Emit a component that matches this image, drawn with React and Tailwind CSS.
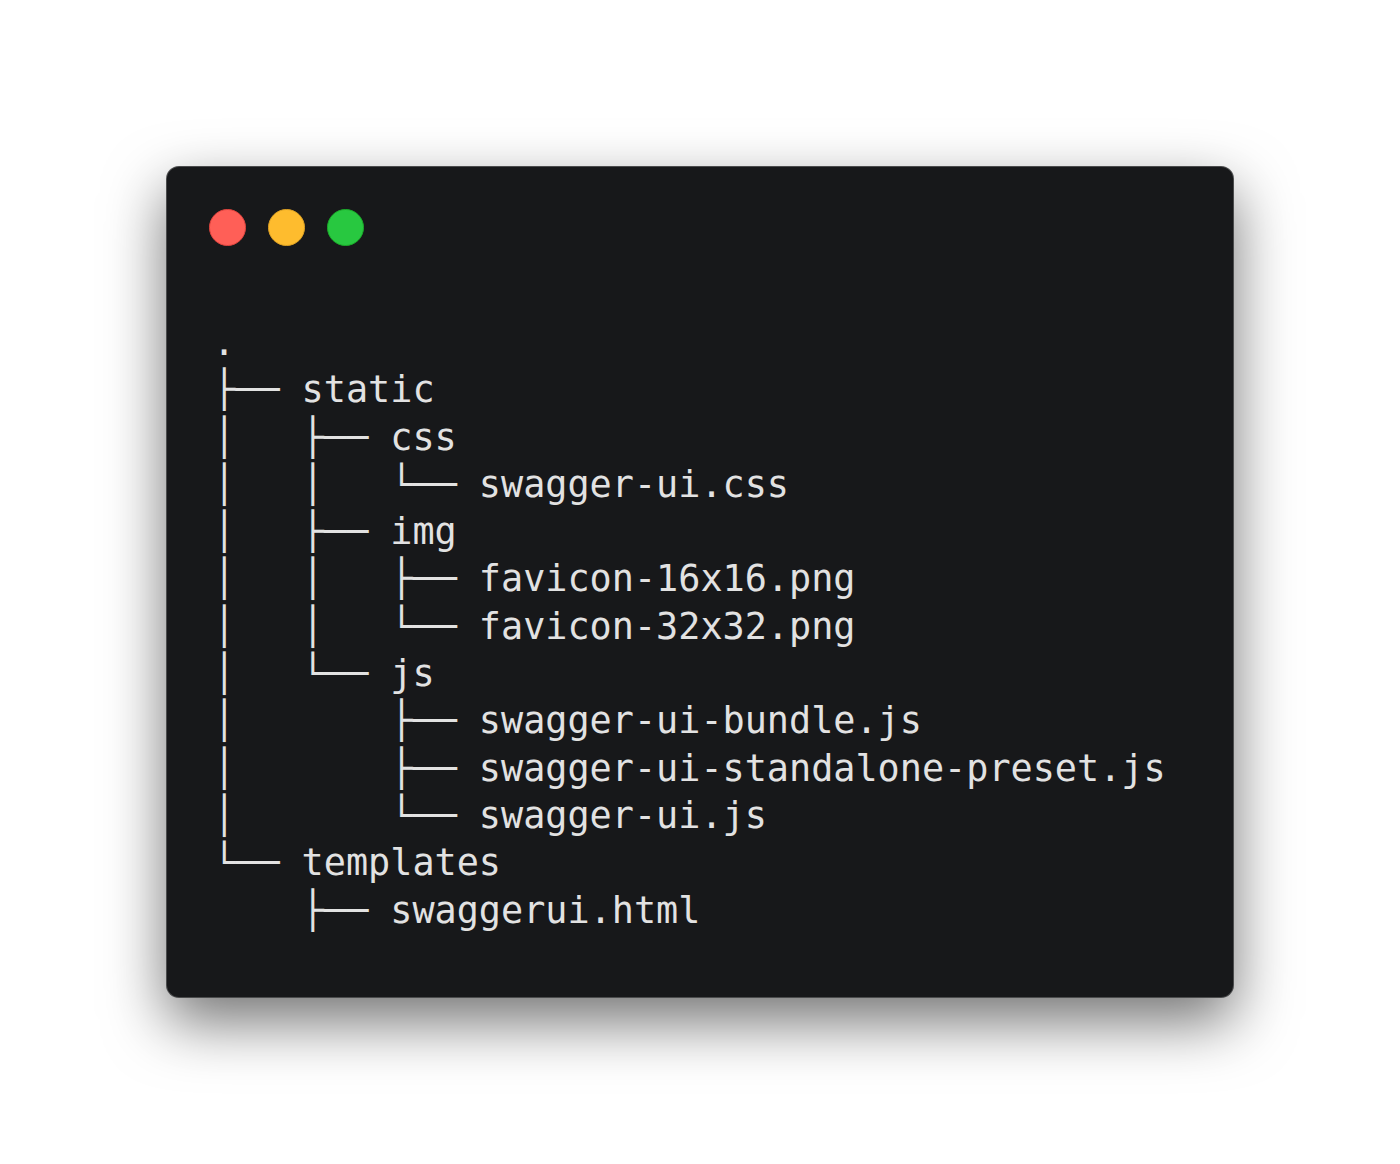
import React from 'react';

const tree = `.
├── static
│   ├── css
│   │   └── swagger-ui.css
│   ├── img
│   │   ├── favicon-16x16.png
│   │   └── favicon-32x32.png
│   └── js
│       ├── swagger-ui-bundle.js
│       ├── swagger-ui-standalone-preset.js
│       └── swagger-ui.js
└── templates
    ├── swaggerui.html`;

function TrafficLights() {
  return (
    <div className="flex items-center gap-[22px]">
      <span className="block w-[37px] h-[37px] rounded-full bg-[#ff5f57] border border-[#e0443e]" />
      <span className="block w-[37px] h-[37px] rounded-full bg-[#febc2e] border border-[#dea123]" />
      <span className="block w-[37px] h-[37px] rounded-full bg-[#28c840] border border-[#1aab29]" />
    </div>
  );
}

export default function App() {
  return (
    <div className="w-[1400px] h-[1164px] bg-white flex items-start justify-center pt-[166px]">
      {/* Terminal window */}
      <div className="w-[1068px] h-[832px] bg-[#17181a] rounded-[13px] border border-[#9a9a9a]/40 shadow-[0_24px_60px_rgba(0,0,0,0.55)] pt-[42px] pl-[42px]">
        <TrafficLights />
        <pre
          className="mt-[73px] ml-[4px] text-[36.8px] leading-[47.3px] text-[#e2e2e2]"
          style={{ fontFamily: '"DejaVu Sans Mono", "Liberation Mono", monospace' }}
        >
          {tree}
        </pre>
      </div>
    </div>
  );
}
